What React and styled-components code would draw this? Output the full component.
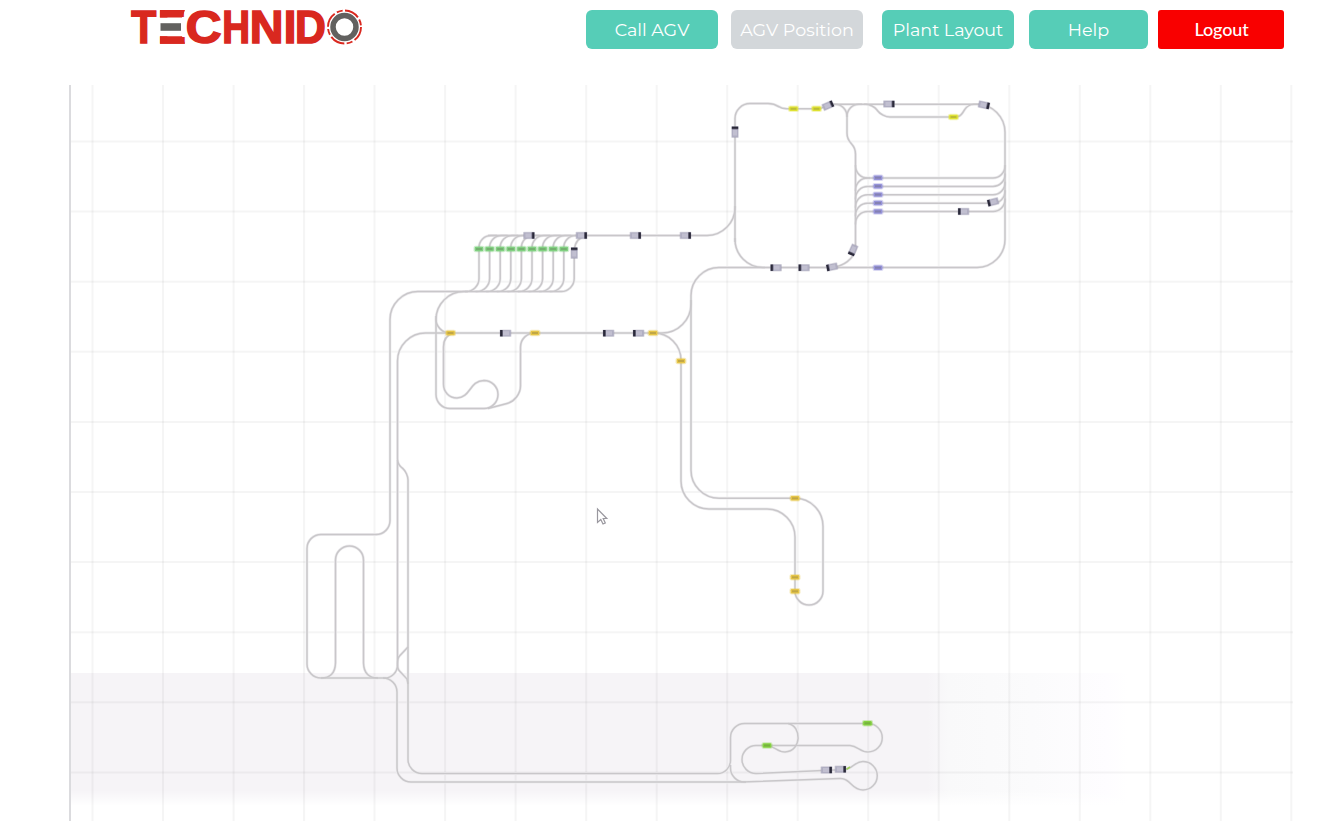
import React from "react";
import styled, { createGlobalStyle } from "styled-components";

const GlobalStyle = createGlobalStyle`
  * { box-sizing: border-box; }
  body { margin: 0; background: #fff; overflow: hidden; }
`;

const Page = styled.div`
  width: 1332px;
  height: 824px;
  display: flex;
  flex-direction: column;
  background: #fff;
`;

const Header = styled.header`
  display: flex;
  height: 85px;
  padding: 0 48px 0 129px;
  align-items: flex-start;
  justify-content: space-between;
`;

const Logo = styled.svg`
  display: block;
  width: 236px;
  height: 70px;
  overflow: visible;
  font-family: "Liberation Sans", sans-serif;
  font-weight: 700;
`;

const Nav = styled.nav`
  display: flex;
  padding-top: 10px;
`;

const NavButton = styled.button`
  width: ${(p) => p.$width}px;
  height: 39px;
  margin-left: ${(p) => p.$gap}px;
  padding: 1px 0 0;
  border: 0;
  border-radius: 6px;
  background: ${(p) => (p.$active ? "#d3d7da" : "#56cdb7")};
  color: #fff;
  font: 400 17.5px/38px Montserrat, Inter, sans-serif;
  white-space: nowrap;
`;

const LogoutButton = styled(NavButton)`
  padding: 0 0 1px 1px;
  border-radius: 3px;
  background: #f90000;
  font: 500 18px/38px Lato, sans-serif;
  letter-spacing: -0.15px;
`;

const MapPanel = styled.main`
  width: 1224px;
  height: 736px;
  margin-left: 69px;
  border-left: 2px solid #dbdbde;
`;

const MapCanvas = styled.svg`
  display: block;
  width: 1222px;
  height: 736px;
`;

const NAV = [
  { label: "Call AGV", width: 132, gap: 0 },
  { label: "AGV Position", width: 132, gap: 13, active: true },
  { label: "Plant Layout", width: 132, gap: 19 },
  { label: "Help", width: 119, gap: 15 },
];

// [letter, left edge, width]
const LETTERS = [
  ["T", 130.5, 26.5],
  ["E", 160, 25],
  ["C", 186, 35],
  ["H", 224, 25],
  ["N", 252, 30],
  ["I", 286, 8.5],
  ["D", 297, 28.5],
];

const GRID_X = Array.from({ length: 18 }, (_, i) => 92.5 + i * 70.52);
const GRID_Y = Array.from({ length: 10 }, (_, i) => 141.5 + i * 70.1);

// Builds a path through corner points [x, y, tangent length], rounding each corner.
function route(points) {
  const toward = (from, to, d) => {
    const len = Math.hypot(to[0] - from[0], to[1] - from[1]);
    const k = Math.min(d, len) / len;
    return [from[0] + (to[0] - from[0]) * k, from[1] + (to[1] - from[1]) * k];
  };
  const s = (p) => `${p[0].toFixed(2)} ${p[1].toFixed(2)}`;
  let d = `M${s(points[0])}`;
  for (let i = 1; i < points.length - 1; i += 1) {
    const p = points[i];
    const r = p[2] || 0;
    const a = points[i - 1];
    const b = points[i + 1];
    d += `L${s(toward(p, a, r))}C${s(toward(p, a, r * 0.45))} ${s(toward(p, b, r * 0.45))} ${s(toward(p, b, r))}`;
  }
  return `${d}L${s(points[points.length - 1])}`;
}

const LANES = Array.from({ length: 9 }, (_, i) => 479 + i * 10.6);
const RACKS = [178, 186.4, 194.8, 203.2, 211.5];

const TRACKS = [
  // north-east loop
  route([[735, 242], [735, 103.5, 15], [774, 103.5, 6], [782, 108.8, 5], [821, 108.8, 4], [829, 104.3, 4], [1005, 104.3, 28], [1005, 267.5, 28], [691, 267.5, 28], [691, 498.2, 28], [823, 498.2, 28], [823, 591]]),
  "M823 591A14 14 0 0 1 795 591",
  route([[795, 591], [795, 509, 28], [681, 509, 28], [681, 333, 27], [651, 333]]),
  route([[735, 238], [735, 267.5, 28], [765, 267.5]]),
  route([[832, 104.3], [847, 104.3, 12], [847, 139, 6], [855.5, 148, 6], [855.5, 250]]),
  "M855.500 250C853 259 844 266 832 267.500",
  route([[847, 117], [847, 104.3, 12], [862, 104.3]]),
  route([[864, 104.3], [873, 104.3, 7], [882, 117, 8], [960, 117, 5], [968, 104.3, 6], [980, 104.3]]),
  // transfer line and west tracks
  route([[735, 206], [735, 235.5, 28], [488, 235.5]]),
  route([[574.2, 250], [574.2, 291.5, 13], [390, 291.5, 28], [390, 534.5, 14], [307, 534.5, 14], [307, 678, 14], [397, 678, 14], [397, 782, 14], [742, 782]]),
  "M742 782L840 778.500C851 778 851 790 863 790A14.250 14.250 0 0 0 863 761.500C855 761.500 852 769 845 769.500L756 773.500A14 14 0 0 1 756 745.500H850C858 746 860 752 868 752A14.250 14.250 0 0 0 868 723.500",
  route([[868, 723.5], [730.5, 723.5, 14], [730.5, 773.5, 13], [408, 773.5, 14], [408, 473, 7], [397.5, 464, 5], [397.5, 333, 28], [653, 333]]),
  route([[650, 333], [691, 333, 29], [691, 300]]),
  route([[468, 291.5], [436, 291.5, 28], [436, 408.5, 14], [484, 408.5]]),
  "M484 408.500A14 14 0 0 0 484 380.500C469 381 471 397.500 457 398C449 398 443.500 392 443.500 384V347Q443.500 336 453 333",
  route([[436, 316], [436, 333, 14], [452, 333]]),
  route([[537, 333], [520.5, 333, 14], [520.5, 400, 14], [488, 408.5]]),
  "M321 678Q335 678 335.500 663V560A14 14 0 0 1 363.500 560V663Q364 678 378 678",
  route([[397.5, 460], [397.5, 678, 13], [383, 678]]),
  "M408 647L399.500 656Q397.500 658 397.500 664Q397.500 669 399.500 671L407 679L408 684",
  route([[730.5, 765], [730.5, 782, 14], [746, 782]]),
  "M788 723.500C802 726 802 751 785 752C777 752 775 746 767 745.500",
  // green station lanes
  ...LANES.map((x) => route([[x + 18, 235.5], [x, 235.5, 12], [x, 291.5, 13], [x - 14, 291.5]])),
  "M587 235.500Q575 238 574.400 250",
  // parking racks
  ...RACKS.map((y) => route([[855.5, y + 13], [855.5, y, 12], [1005, y, 12], [1005, y - 13]])),
  route([[855.5, 165], [855.5, 178, 12], [870, 178]]),
];

const MARKS = [
  ["#dfe233", [[793.5, 108.8], [816.5, 108.8], [953.5, 117]]],
  ["#9592d9", [[878, 177.7], [878, 186.2], [878, 194.6], [878, 203], [878, 211.5], [878, 267.7]]],
  ["#80d080", LANES.map((x) => [x, 249])],
  ["#e6c547", [[450.5, 333], [535, 333], [653, 333], [681, 361], [795, 498.3], [795, 577.3], [795, 591.3]]],
  ["#84d240", [[867.5, 723.3], [767, 745.5]]],
];

// [x, y, heading in degrees]
const VEHICLES = [
  [735, 132, -90], [828, 105.5, -24], [889, 104, 0], [984, 105, 12],
  [993, 202, 166], [963.5, 211.5, 180], [853, 250, 114], [832, 267, 169],
  [804, 267.7, 180], [776, 267.7, 180], [529, 235.5, 0],
  [581.5, 235.5, 0], [635.5, 235.5, 0], [685.5, 235.5, 0],
  [574.2, 253, -90], [505.5, 333.2, 180], [608.5, 333.2, 180],
  [638.5, 333.2, 180], [826.5, 770, 0], [840.5, 769.3, 0],
];

// Stretches a letter horizontally so that its ink fills the given box.
function Glyph({ letter, x, width }) {
  const [fit, setFit] = React.useState({ scale: 1, left: 0 });
  React.useLayoutEffect(() => {
    const ctx = document.createElement("canvas").getContext("2d");
    ctx.font = '700 46px "Liberation Sans", sans-serif';
    const m = ctx.measureText(letter);
    const ink = m.actualBoundingBoxLeft + m.actualBoundingBoxRight;
    setFit({ scale: (width - 1.6) / ink, left: m.actualBoundingBoxLeft });
  }, [letter, width]);
  return (
    <text
      fill="#d9281f"
      stroke="#d9281f"
      strokeWidth="1.600"
      fontSize="46"
      transform={`translate(${x + 0.8 + fit.left * fit.scale} 42.900) scale(${fit.scale} 1)`}
    >
      {letter}
    </text>
  );
}

function TechnidoLogo() {
  return (
    <Logo viewBox="129 0 236 70" aria-label="Technido">
      {LETTERS.map(([letter, x, width]) => (
        <Glyph key={letter} letter={letter} x={x} width={width} />
      ))}
      <path d="M159 17.500H186V36.300H159Z" fill="#fff" />
      <path d="M160 10H185L182 17.500H160ZM160 36.300H182L185 43.700H160Z" fill="#d9281f" />
      <path d="M160.500 23.200H181V30.800H160.500Z" fill="#62615f" />
      <circle cx="344.500" cy="27" r="18.500" fill="#fff" />
      <circle cx="344.500" cy="27" r="16.500" fill="none" stroke="#d9281f" strokeWidth="1.900" strokeDasharray="15 2.500 6 2.420" />
      <circle cx="344.500" cy="27" r="11.500" fill="none" stroke="#62615f" strokeWidth="5.500" />
    </Logo>
  );
}

function Vehicle({ x, y, angle }) {
  return (
    <g transform={`translate(${x} ${y}) rotate(${angle})`}>
      <rect x="-6" y="-3.800" width="12" height="7.600" rx="1" fill="#8a88a0" opacity=".3" />
      <rect x="-5.300" y="-3.100" width="10.600" height="6.200" fill="#b0aec2" />
      <rect x="-3.500" y="-2" width="6" height="4" fill="#c1bfd0" />
      <rect x="2.500" y="-3.100" width="1" height="6.200" fill="#777589" />
      <rect x="3.200" y="-3.200" width="2.200" height="6.400" fill="#2a2939" />
    </g>
  );
}

function Mark({ x, y, color }) {
  return (
    <g fill={color}>
      <rect x={x - 5.5} y={y - 3.2} width="11" height="6.400" rx="2" opacity=".35" />
      <rect x={x - 4.3} y={y - 2.2} width="8.600" height="4.400" rx="1.200" />
      <path d={`M${x - 3} ${y}H${x + 3}`} stroke="#554f40" strokeOpacity=".25" strokeWidth="2" />
    </g>
  );
}

function PlantMap() {
  return (
    <MapCanvas viewBox="71 85 1222 736">
      <defs>
        <linearGradient id="zone-x">
          <stop offset="0" stopColor="#f6f4f7" />
          <stop offset=".81" stopColor="#f6f4f7" />
          <stop offset=".83" stopColor="#f9f9fa" />
          <stop offset=".91" stopColor="#fbfbfc" />
          <stop offset=".98" stopColor="#fefdff" />
          <stop offset="1" stopColor="#fff" />
        </linearGradient>
        <linearGradient id="zone-y" x2="0" y2="1">
          <stop offset="0" stopColor="#fff" stopOpacity="0" />
          <stop offset="1" stopColor="#fff" />
        </linearGradient>
      </defs>
      <rect x="71" y="673" width="1057" height="132" fill="url(#zone-x)" />
      <rect x="71" y="790" width="1057" height="16" fill="url(#zone-y)" />
      <g stroke="#67636c" strokeOpacity=".065" strokeWidth="2">
        {GRID_X.map((x) => <path key={x} d={`M${x} 85V821`} />)}
        {GRID_Y.map((y) => <path key={y} d={`M71 ${y}H1293`} />)}
      </g>
      <g fill="none" stroke="#eeedef" strokeWidth="2.800">
        {TRACKS.map((d) => <path key={d} d={d} />)}
      </g>
      <g fill="none" stroke="#c9c7ca" strokeWidth="1.500">
        {TRACKS.map((d) => <path key={d} d={d} />)}
      </g>
      {MARKS.map(([color, points]) =>
        points.map(([x, y]) => <Mark key={`${x}-${y}`} x={x} y={y} color={color} />)
      )}
      {VEHICLES.map(([x, y, angle]) => <Vehicle key={`${x}-${y}`} x={x} y={y} angle={angle} />)}
      <path d="M846.500 769.200L850 767" stroke="#a0ce60" strokeWidth="1.800" />
      <path d="M597.500 509V522.500L600.800 519.500L603 524L605.300 523L603.200 518.500H606.800Z" fill="#fff" stroke="#9a989f" strokeWidth="1.200" />
    </MapCanvas>
  );
}

export default function App() {
  return (
    <Page>
      <GlobalStyle />
      <Header>
        <TechnidoLogo />
        <Nav>
          {NAV.map((n) => (
            <NavButton key={n.label} $width={n.width} $gap={n.gap} $active={n.active}>
              {n.label}
            </NavButton>
          ))}
          <LogoutButton $width={126} $gap={10}>Logout</LogoutButton>
        </Nav>
      </Header>
      <MapPanel>
        <PlantMap />
      </MapPanel>
    </Page>
  );
}
